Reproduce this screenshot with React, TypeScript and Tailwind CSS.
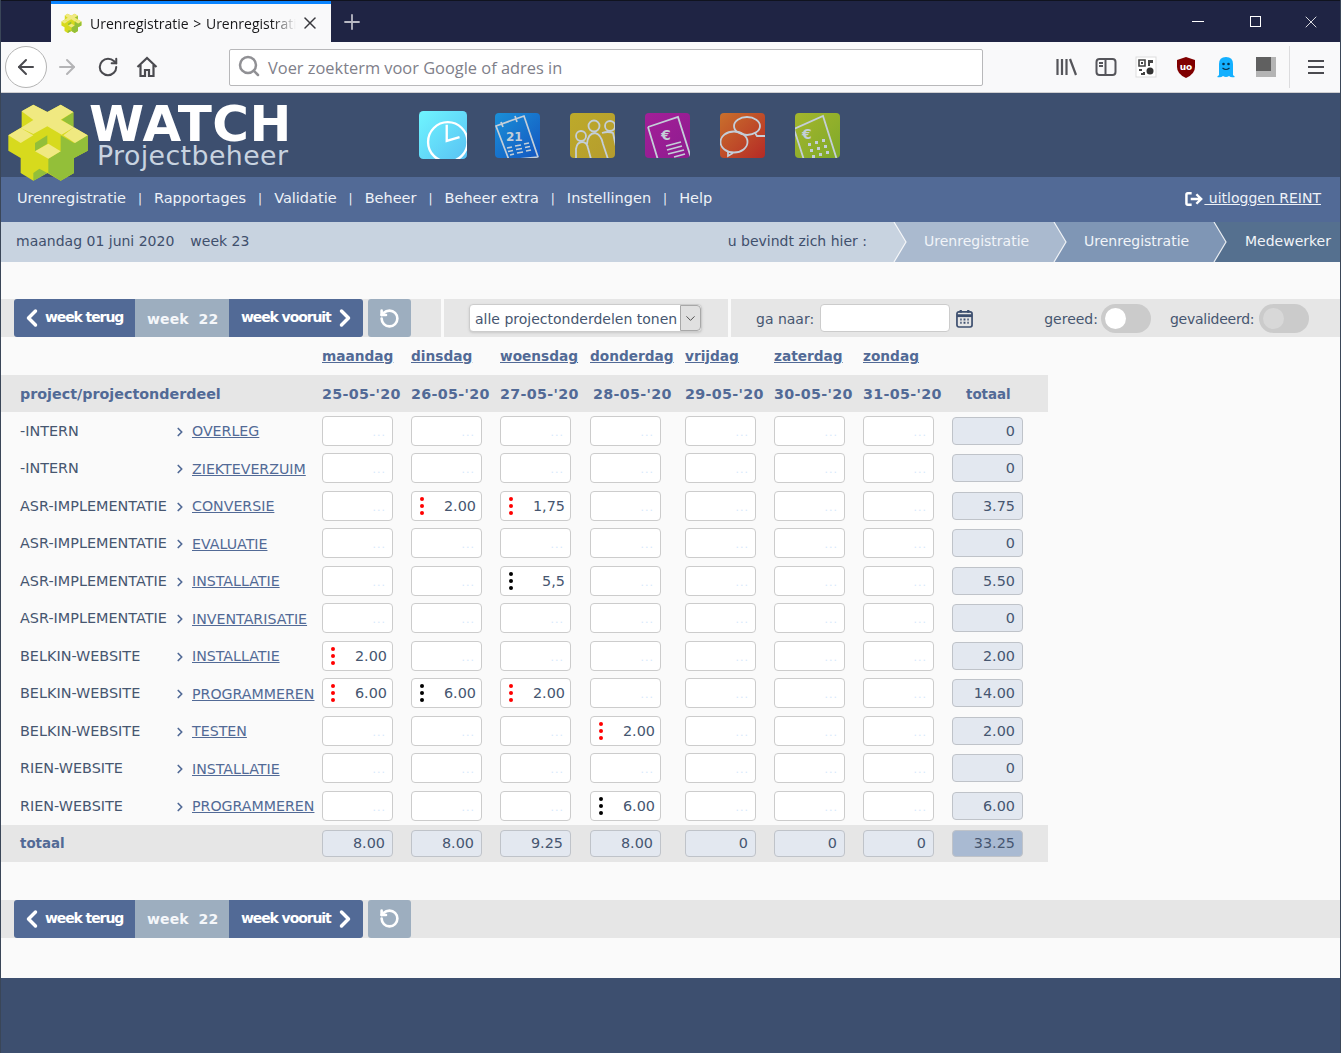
import React from "react";
import { ChevronLeft, ChevronRight, RotateCcw, Search, X, Plus, ArrowLeft, ArrowRight, RotateCw, ChevronDown } from "lucide-react";

const font = "font-['DejaVu_Sans',sans-serif]";

const days = [
    { name: "maandag", date: "25-05-'20", total: "8.00" },
    { name: "dinsdag", date: "26-05-'20", total: "8.00" },
    { name: "woensdag", date: "27-05-'20", total: "9.25" },
    { name: "donderdag", date: "28-05-'20", total: "8.00" },
    { name: "vrijdag", date: "29-05-'20", total: "0" },
    { name: "zaterdag", date: "30-05-'20", total: "0" },
    { name: "zondag", date: "31-05-'20", total: "0" },
];

type Entry = { v: string; c: "red" | "black" } | null;
const e = null;
const r = (v: string): Entry => ({ v, c: "red" });
const b = (v: string): Entry => ({ v, c: "black" });

const rows: { project: string; part: string; cells: Entry[]; total: string }[] = [
    { project: "-INTERN", part: "OVERLEG", cells: [e, e, e, e, e, e, e], total: "0" },
    { project: "-INTERN", part: "ZIEKTEVERZUIM", cells: [e, e, e, e, e, e, e], total: "0" },
    { project: "ASR-IMPLEMENTATIE", part: "CONVERSIE", cells: [e, r("2.00"), r("1,75"), e, e, e, e], total: "3.75" },
    { project: "ASR-IMPLEMENTATIE", part: "EVALUATIE", cells: [e, e, e, e, e, e, e], total: "0" },
    { project: "ASR-IMPLEMENTATIE", part: "INSTALLATIE", cells: [e, e, b("5,5"), e, e, e, e], total: "5.50" },
    { project: "ASR-IMPLEMENTATIE", part: "INVENTARISATIE", cells: [e, e, e, e, e, e, e], total: "0" },
    { project: "BELKIN-WEBSITE", part: "INSTALLATIE", cells: [r("2.00"), e, e, e, e, e, e], total: "2.00" },
    { project: "BELKIN-WEBSITE", part: "PROGRAMMEREN", cells: [r("6.00"), b("6.00"), r("2.00"), e, e, e, e], total: "14.00" },
    { project: "BELKIN-WEBSITE", part: "TESTEN", cells: [e, e, e, r("2.00"), e, e, e], total: "2.00" },
    { project: "RIEN-WEBSITE", part: "INSTALLATIE", cells: [e, e, e, e, e, e, e], total: "0" },
    { project: "RIEN-WEBSITE", part: "PROGRAMMEREN", cells: [e, e, e, b("6.00"), e, e, e], total: "6.00" },
];

const gridCols = "grid grid-cols-[156px_146px_89px_89px_90px_95px_89px_89px_89px_96px] w-[1047px] pl-[19px]";

function LogoShape() {
    return (
        <>
            <polygon points="65,40 100,20 142,42 182,20 220,42 220,88 263,112 263,158 222,180 222,225 182,248 142,225 100,248 62,225 62,180 25,158 25,112 65,88" fill="#d7da1d" />
            <polygon points="145,182 182,160 182,112 222,135 263,112 263,158 222,180 222,225 182,248 145,225" fill="#93bf39" />
            <polygon points="105,135 142,112 142,137 105,160" fill="#93bf39" />
            <polygon points="100,225 118,212 142,225 100,248" fill="#93bf39" />
            <polygon points="185,65 220,42 220,88" fill="#93bf39" />
            <polygon points="65,40 100,20 142,42 182,20 220,42 182,65 222,88 185,110 142,85 100,108 62,90 100,66" fill="#f0e981" />
            <polygon points="25,112 62,90 100,112 62,135" fill="#f0e981" />
            <polygon points="222,88 263,112 225,135 190,112" fill="#f0e981" />
            <polygon points="105,160 145,137 182,160 145,182" fill="#f0e981" />
        </>
    );
}

function Logo() {
    return (
        <svg viewBox="0 0 300 270" className="absolute left-[-1px] top-[5px] w-[100px] h-[90px] z-10">
            <LogoShape />
        </svg>
    );
}

function Favicon() {
    return (
        <svg viewBox="20 15 250 240" className="w-[21px] h-[21px]">
            <LogoShape />
        </svg>
    );
}

function Tile({ from, to, big, sw, children }: { from: string; to: string; big?: boolean; sw?: number; children: React.ReactNode }) {
    const cls = big ? "w-[48px] h-[48px]" : "w-[45px] h-[45px]";
    return (
        <svg viewBox="0 0 45 45" className={cls}>
            <defs>
                <linearGradient id={from.slice(1)} x1="0" y1="0" x2="1" y2="1">
                    <stop offset="0" stopColor={from} />
                    <stop offset="1" stopColor={to} />
                </linearGradient>
                <clipPath id={"c" + from.slice(1)}>
                    <rect width="45" height="45" rx="4" />
                </clipPath>
            </defs>
            <g clipPath={"url(#c" + from.slice(1) + ")"}>
                <rect width="45" height="45" fill={"url(#" + from.slice(1) + ")"} />
                <g fill="none" stroke="#c4ced8" strokeWidth={sw || 1.5}>{children}</g>
            </g>
        </svg>
    );
}

function AppIcons() {
    return (
        <div className="flex items-center gap-[30px] ml-[418px] h-full">
            <div className="mr-[-2px]">
                <Tile from="#6ff5ff" to="#59c2f3" big>
                    <g stroke="#ffffff" strokeWidth="2.2">
                        <circle cx="27" cy="29" r="18.5" />
                        <path d="M26 13 V28 L38 24.5" />
                    </g>
                </Tile>
            </div>
            <Tile from="#1a90d8" to="#1456c0" sw={1.7}>
                <path d="M1 13 L29 3 L43 44 L14 47 Z M6 9 L8 14 M20 3 L22 9" />
                <text x="11" y="28" fontSize="12" fontWeight="700" fill="#c4ced8" stroke="none" fontFamily="DejaVu Sans">21</text>
                <path d="M12 35 L17 34 M20 33 L26 32 M29 31 L34 30 M13 38.5 L18 37.5 M21 36.5 L27 35.5 M30 34.5 L35 33.5 M15 42 L19 41 M22 40 L28 39 M31 38 L36 37" />
            </Tile>
            <Tile from="#bdaa2a" to="#b59c2e" sw={1.8}>
                <circle cx="11" cy="23" r="5" />
                <circle cx="24" cy="13" r="5.5" />
                <circle cx="40" cy="13" r="5" />
                <path d="M6 46 V36 Q7 29 12 29 Q17 29 18 35 L21 46 M17 31 Q18 20 25 20 Q31 21 33 31 L38 46 M32 20 Q38 18 43 20 L47 38" />
            </Tile>
            <Tile from="#a31f98" to="#8e1c8f" sw={1.8}>
                <path d="M3 14 L33 4 L46 45 M3 14 L13 47" />
                <text x="16" y="27" fontSize="14" fontWeight="700" fill="#c4ced8" stroke="none" fontFamily="DejaVu Sans">€</text>
                <path d="M21 33 L36 29 M22 37 L37 33 M23 41 L39 37 M29 44 L40 41" />
            </Tile>
            <Tile from="#c9702c" to="#b52a26" sw={1.8}>
                <ellipse cx="27" cy="13" rx="13" ry="9" />
                <path d="M35 20 L37 23 L45 23" />
                <ellipse cx="14" cy="29" rx="13.5" ry="10.5" />
                <path d="M8 38 L8 43 L13 40" />
            </Tile>
            <Tile from="#a4b62c" to="#7fa92a" sw={1.8}>
                <path d="M-1 16 L28 3 L42 47 M-1 16 L9 47" />
                <text x="7" y="26" fontSize="14" fontWeight="700" fill="#c4ced8" stroke="none" fontFamily="DejaVu Sans">€</text>
                <g fill="#c4ced8" stroke="none">
                    {[0, 1, 2].map((i) =>
                        [0, 1, 2].map((j) => <rect key={i + "-" + j} x={13 + i * 7 + j * 2} y={30 - i * 2 + j * 6} width="3" height="3" />)
                    )}
                </g>
            </Tile>
        </div>
    );
}

function BrowserChrome() {
    return (
        <>
            <div className="h-[42px] bg-[#1f2444] flex items-end border-t border-[#10131f]">
                <div className="ml-[50px] w-[280px] h-[41px] bg-[#f9f9fa] border-t-[3px] border-[#0a84ff] flex items-center pl-[10px] pr-[8px] font-['Open_Sans',sans-serif] text-[14px] text-[#18181a]">
                    <Favicon />
                    <span className="ml-[8px] whitespace-nowrap overflow-hidden w-[206px] mr-[5px] [word-spacing:1px] [mask-image:linear-gradient(to_left,transparent,black_24px)]">
                        Urenregistratie &gt; Urenregistratie
                    </span>
                    <X size={20} strokeWidth={1.8} className="text-[#38383d] ml-[-1px]" />
                </div>
                <div className="ml-[9px] h-[41px] flex items-center text-[#b9bac4]">
                    <Plus size={24} strokeWidth={1.8} />
                </div>
                <div className="ml-auto h-[41px] flex items-center text-white mr-[1px]">
                    <div className="w-[56px] flex justify-center mr-[1px]"><div className="w-[12px] h-px bg-white" /></div>
                    <div className="w-[56px] flex justify-center"><div className="w-[11px] h-[11px] border border-white" /></div>
                    <div className="w-[56px] flex justify-center"><X size={20} strokeWidth={1} /></div>
                </div>
            </div>
            <div className="h-[51px] bg-[#f9f9fa] border-b border-[#cfcfd1] flex items-center relative">
                <div className="ml-[4px] w-[42px] h-[42px] rounded-full border border-[#b4b4b4] bg-white flex items-center justify-center text-[#4a4a4f]">
                    <ArrowLeft size={24} strokeWidth={2} />
                </div>
                <ArrowRight size={24} strokeWidth={2} className="ml-[8px] text-[#b4b4b6]" />
                <RotateCw size={22} strokeWidth={2.2} className="ml-[18px] text-[#4a4a4f]" />
                <svg viewBox="0 0 22 22" className="ml-[17px] w-[22px] h-[22px]" fill="none" stroke="#4a4a4f" strokeWidth="2.2">
                    <path d="M1.5 11 L11 2 L20.5 11 M4.5 9 V20 H9 V14 H13 V20 H17.5 V9" />
                </svg>
                <div className="ml-[71px] w-[754px] h-[37px] bg-white border border-[#b8b8ba] rounded-[2px] flex items-center pl-[7px] text-[#80808a] font-['Open_Sans',sans-serif] text-[16.4px]">
                    <Search size={24} strokeWidth={2.5} className="text-[#909094] mt-[-3px]" />
                    <span className="ml-[7px] pt-[3px]">Voer zoekterm voor Google of adres in</span>
                </div>
                <div className="ml-[71px] flex items-center gap-[16px]">
                    <svg viewBox="0 0 24 24" className="w-[24px] h-[24px]" fill="none" stroke="#55555a" strokeWidth="2.2">
                        <path d="M3.5 4 V20 M8 4 V20 M12.5 4 V20 M16 4 L22 20" />
                    </svg>
                    <svg viewBox="0 0 24 24" className="w-[24px] h-[24px]" fill="none" stroke="#55555a" strokeWidth="2">
                        <rect x="2.5" y="4" width="19" height="16" rx="3" />
                        <path d="M11.5 4 V20 M5 8 H9 M5 11 H9" />
                    </svg>
                    <svg viewBox="0 0 24 24" className="w-[24px] h-[24px]">
                        <rect x="2" y="2" width="20" height="20" fill="#fff" stroke="#ddd" />
                        <path d="M5 5 H11 V11 H5 Z" fill="none" stroke="#444" strokeWidth="1.6" />
                        <rect x="7" y="7" width="2" height="2" fill="#444" />
                        <path d="M14 5 H19 V8 H16 V11 H14 Z M5 14 H8 V16 H5 Z M9 17 H11 V20 H7 V18 H9 Z" fill="#444" />
                        <circle cx="16" cy="16" r="3.5" fill="#333" />
                    </svg>
                    <svg viewBox="0 0 24 24" className="w-[24px] h-[24px]">
                        <path d="M12 2 L21 5 V12 Q21 19 12 23 Q3 19 3 12 V5 Z" fill="#800000" />
                        <text x="12" y="15" textAnchor="middle" fontSize="9" fontWeight="700" fill="#fff" fontFamily="DejaVu Sans">uo</text>
                    </svg>
                    <svg viewBox="0 0 24 24" className="w-[24px] h-[24px]">
                        <path d="M5 20 V9 Q5 2 12 2 Q19 2 19 9 V20 L21 22 Q17 23 15 21 Q12 23 9 21 Q7 23 3 22 Z" fill="#14b0ff" />
                        <circle cx="9.5" cy="9" r="1.3" fill="#082f4a" />
                        <circle cx="14.5" cy="9" r="1.3" fill="#082f4a" />
                        <path d="M8.5 13 Q12 16 15.5 13" stroke="#082f4a" strokeWidth="1.2" fill="none" />
                    </svg>
                    <svg viewBox="0 0 20 20" className="w-[20px] h-[20px] mx-[2px]">
                        <rect width="20" height="20" fill="#b4b4b4" />
                        <rect width="15" height="14" fill="#606060" />
                    </svg>
                </div>
                <div className="ml-[11px] w-px h-[42px] bg-[#dcdcde]" />
                <svg viewBox="0 0 16 16" className="ml-[18px] w-[16px] h-[16px]" stroke="#4a4a4f" strokeWidth="2">
                    <path d="M0 2 H16 M0 8 H16 M0 14 H16" />
                </svg>
            </div>
        </>
    );
}

function Crumb({ prev, next }: { prev: string; next: string }) {
    return (
        <svg viewBox="0 0 14 40" preserveAspectRatio="none" className="w-[14px] h-[40px] shrink-0" style={{ background: next }}>
            <polygon points="0,0 1,0 13,20 1,40 0,40" fill={prev} />
            <path d="M1 0 L13 20 L1 40" fill="none" stroke="#ffffff" strokeOpacity="0.85" strokeWidth="1.2" />
        </svg>
    );
}

function Nav() {
    const items = ["Urenregistratie", "Rapportages", "Validatie", "Beheer", "Beheer extra", "Instellingen", "Help"];
    return (
        <div className="h-[45px] bg-[#526a96] flex items-center pl-[16px] pr-[19px] pb-[2px] text-[14.5px] text-[#eef2f8]">
            {items.map((it, i) => (
                <React.Fragment key={it}>
                    {i > 0 && <span className="mx-[12px] text-[12px]">|</span>}
                    <span>{it}</span>
                </React.Fragment>
            ))}
            <span className="ml-auto flex items-center text-[14px]">
                <svg viewBox="0 0 20 16" className="w-[19px] h-[16px]" fill="none" stroke="#fff" strokeWidth="2.6">
                    <path d="M7 2 H3 Q1.5 2 1.5 3.5 V12.5 Q1.5 14 3 14 H7" />
                    <path d="M6 8 H17 M12 3 L17 8 L12 13" />
                </svg>
                <a className="underline whitespace-pre"> uitloggen REINT</a>
            </span>
        </div>
    );
}

function Breadcrumb() {
    return (
        <div className="h-[40px] bg-[#c8d3e0] flex items-center pl-[15px] text-[14px] text-[#3f4f6c]">
            <span className="pb-[2px]">maandag 01 juni 2020</span>
            <span className="ml-[16px] pb-[2px]">week 23</span>
            <span className="ml-auto mr-[26px] pb-[2px]">u bevindt zich hier :</span>
            <div className="flex h-[40px] w-[447px] text-[#f1f4f8]">
                <Crumb prev="#c8d3e0" next="#aabacf" />
                <div className="w-[146px] bg-[#aabacf] flex items-center pl-[17px] pb-[2px]">Urenregistratie</div>
                <Crumb prev="#aabacf" next="#7f96b5" />
                <div className="w-[146px] bg-[#7f96b5] flex items-center pl-[17px] pb-[2px]">Urenregistratie</div>
                <Crumb prev="#7f96b5" next="#55708f" />
                <div className="flex-1 bg-[#55708f] flex items-center pl-[18px] pb-[2px] whitespace-nowrap">Medewerker</div>
            </div>
        </div>
    );
}

function WeekNav() {
    return (
        <div className="flex items-stretch h-[38px] ml-[13px] text-white font-bold">
            <div className="w-[121px] bg-[#526a96] rounded-l-[3px] flex items-center pl-[4px] text-[14px] tracking-[-1.1px]">
                <ChevronLeft size={28} strokeWidth={3} className="shrink-0" />
                <span className="ml-[-1px] mb-[1px] whitespace-nowrap">week terug</span>
            </div>
            <div className="w-[94px] bg-[#9daebf] flex items-center pl-[12px] text-[14px] whitespace-pre tracking-[0.1px] pt-[2px] text-[#f5f7fa]">
                week  22
            </div>
            <div className="w-[134px] bg-[#526a96] rounded-r-[3px] flex items-center pl-[12px] text-[14px] tracking-[-1.1px]">
                <span className="mb-[1px] whitespace-nowrap">week vooruit</span>
                <ChevronRight size={28} strokeWidth={3} className="shrink-0" />
            </div>
            <div className="ml-[5px] w-[43px] bg-[#9daebf] rounded-[3px] flex items-center justify-center">
                <RotateCcw size={21} strokeWidth={3} />
            </div>
        </div>
    );
}

function Toggle({ on }: { on?: boolean }) {
    return (
        <div className="w-[50px] h-[29px] rounded-full bg-[#cbcbcb] flex items-center pl-[4px]">
            <div className={on ? "w-[21px] h-[21px] rounded-full bg-white" : "w-[21px] h-[21px] rounded-full bg-[#d8d8d8]"} />
        </div>
    );
}

function Toolbar() {
    return (
        <div className="mt-[37px] flex h-[38px] gap-[3px] text-[14px] text-[#465670]">
            <div className="w-[440px] bg-[#e6e6e6] flex items-center">
                <WeekNav />
            </div>
            <div className="w-[284px] bg-[#e6e6e6] flex items-center pl-[25px]">
                <div className="w-[233px] h-[28px] bg-white border border-[#cccccc] rounded-[4px] flex items-center pl-[5px] shadow-sm">
                    <span className="whitespace-nowrap pt-[2px]">alle projectonderdelen tonen</span>
                    <div className="ml-auto w-[21px] h-full bg-[#e0e0e0] border border-[#a8a8a8] rounded-r-[4px] flex items-center justify-center">
                        <ChevronDown size={15} strokeWidth={1.5} className="text-[#444]" />
                    </div>
                </div>
            </div>
            <div className="flex-1 bg-[#e6e6e6] flex items-center pl-[25px]">
                <span className="pt-[2px]">ga naar:</span>
                <div className="ml-[6px] w-[130px] h-[28px] bg-white border border-[#cccccc] rounded-[4px]" />
                <svg viewBox="0 0 18 20" className="ml-[6px] w-[17px] h-[19px]" fill="none" stroke="#3d4f6f" strokeWidth="1.8">
                    <rect x="1" y="3" width="16" height="16" rx="2" />
                    <path d="M1 7 H17" strokeWidth="3" />
                    <path d="M5 1 V4 M13 1 V4" strokeWidth="2.4" />
                    <path d="M4.5 11 H6 M8 11 H10 M12 11 H13.5 M4.5 14.5 H6 M8 14.5 H10 M12 14.5 H13.5" strokeWidth="2" />
                </svg>
                <span className="ml-[71px] mr-[3px] pt-[2px]">gereed:</span>
                <Toggle on />
                <span className="ml-[19px] mr-[5px] pt-[2px] tracking-[-0.25px]">gevalideerd:</span>
                <Toggle />
            </div>
        </div>
    );
}

function Dots({ color }: { color: "red" | "black" }) {
    const cls = color === "red" ? "w-[4px] h-[4px] rounded-full bg-[#ff0000]" : "w-[4px] h-[4px] rounded-full bg-black";
    return (
        <div className="flex flex-col gap-[3px] ml-[8px]">
            <div className={cls} />
            <div className={cls} />
            <div className={cls} />
        </div>
    );
}

function Cell({ entry }: { entry: Entry }) {
    return (
        <div className="self-center w-[71px] h-[30px] bg-white border border-[#cccccc] rounded-[4px] flex items-center pr-[5px] text-[#465670]">
            {entry ? (
                <>
                    <Dots color={entry.c} />
                    <span className="ml-auto pt-[2px]">{entry.v}</span>
                </>
            ) : (
                <span className="ml-auto pt-[4px] pr-[1px] text-[#d5e8fb] text-[11px] tracking-[1px]">...</span>
            )}
        </div>
    );
}

function TotalBox({ value, dark, short }: { value: string; dark?: boolean; short?: boolean }) {
    const bg = dark ? "bg-[#a9bad2]" : "bg-[#e3e8f0]";
    const h = short ? "h-[27px]" : "h-[28px]";
    return (
        <div className={"self-center w-[71px] border border-[#bfc3c9] rounded-[4px] flex items-center justify-end pr-[7px] pt-[2px] text-[#465670] " + bg + " " + h}>
            {value}
        </div>
    );
}

function HoursTable() {
    return (
        <div className="text-[14.4px] text-[#465670]">
            <div className={gridCols + " h-[38px] items-center font-bold text-[#526a96] text-[13.7px] pt-[1px]"}>
                <div className="col-span-2" />
                {days.map((d) => (
                    <a key={d.name} className="underline justify-self-start">{d.name}</a>
                ))}
            </div>
            <div className={gridCols + " h-[37px] items-center font-bold text-[#526a96] text-[14.3px] tracking-[0.3px] bg-[#e6e6e6] pt-[2px]"}>
                <div className="col-span-2 tracking-normal">project/projectonderdeel</div>
                {days.map((d, i) => (
                    <span key={d.date} className={i === 3 ? "whitespace-nowrap pl-[3px]" : "whitespace-nowrap"}>{d.date}</span>
                ))}
                <span className="pl-[14px] pt-[1px] text-[13.4px] tracking-normal">totaal</span>
            </div>
            <div className={gridCols + " auto-rows-[37.5px]"}>
                {rows.map((row, i) => (
                    <React.Fragment key={i}>
                        <div className="self-center whitespace-nowrap pt-[2px]">{row.project}</div>
                        <div className="self-center flex items-center pt-[2px]">
                            <ChevronRight size={14} strokeWidth={3} className="text-[#526a96] ml-[-3px]" />
                            <a className="ml-[5px] underline text-[#526a96] whitespace-nowrap text-[14.2px]">{row.part}</a>
                        </div>
                        {row.cells.map((c, j) => (
                            <Cell key={j} entry={c} />
                        ))}
                        <TotalBox value={row.total} />
                    </React.Fragment>
                ))}
            </div>
            <div className={gridCols + " h-[37px] items-center bg-[#e6e6e6]"}>
                <div className="col-span-2 font-bold text-[13.4px] text-[#526a96] pt-[3px]">totaal</div>
                {days.map((d) => (
                    <TotalBox key={d.date} value={d.total} short />
                ))}
                <TotalBox value="33.25" dark short />
            </div>
        </div>
    );
}

export default function App() {
    return (
        <div className={"w-[1341px] h-[1053px] flex flex-col overflow-hidden border-x border-[#3a4658] bg-[#fafafa] " + font}>
            <BrowserChrome />
            <div className="h-[84px] bg-[#3d4f6f] relative">
                <Logo />
                <div className="absolute left-[88px] top-[12px] text-white font-bold text-[50px] leading-[38px] tracking-[0.5px]">WATCH</div>
                <div className="absolute left-[96px] top-[50px] text-[#c8d3e0] text-[26.8px] leading-[26px] tracking-[0.4px]">Projectbeheer</div>
                <AppIcons />
            </div>
            <Nav />
            <Breadcrumb />
            <Toolbar />
            <HoursTable />
            <div className="mt-[38px] h-[38px] bg-[#e6e6e6] flex items-center">
                <WeekNav />
            </div>
            <div className="flex-1" />
            <div className="h-[75px] bg-[#3d4f6f]" />
        </div>
    );
}
